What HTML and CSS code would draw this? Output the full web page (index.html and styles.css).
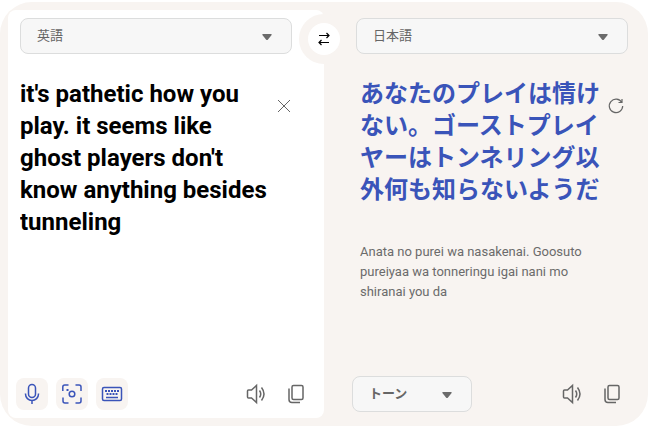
FILE: index.html
```
<!DOCTYPE html>
<html lang="ja">
  <head>
    <meta charset="UTF-8" />
    <meta name="viewport" content="width=device-width, initial-scale=1.0" />
    <title>翻訳</title>
    <link rel="stylesheet" href="styles.css">
  </head>
  <body>
    <main class="translator">
      <section class="panel source">
        <div class="select-box">
          <select class="select" aria-label="翻訳元の言語">
            <option>英語</option>
          </select>
          <svg class="arrow" viewBox="0 0 10 6"><path d="M1 0h8q1 0 .6 1L6 5.500q-1 1-2 0L.4 1Q0 0 1 0z" /></svg>
        </div>
        <div class="content">
          <textarea class="source-text" aria-label="原文" spellcheck="false">it's pathetic how you play. it seems like ghost players don't know anything besides tunneling</textarea>
          <button class="icon-btn side-btn" aria-label="クリア">
            <svg class="icon" viewBox="0 0 24 24"><path class="thin" d="M6 6l12 12M18 6L6 18" /></svg>
          </button>
        </div>
        <div class="toolbar">
          <button class="icon-btn tool" aria-label="音声入力">
            <svg class="icon" viewBox="0 0 24 24"><rect x="8.500" y="2.500" width="7" height="13" rx="3.500" /><path d="M5.500 11.500v.5a6.500 6.500 0 0 0 13 0v-.5M12 18.500v3.500" /></svg>
          </button>
          <button class="icon-btn tool" aria-label="画像">
            <svg class="icon" viewBox="0 0 24 24"><path d="M2.800 9V5a2 2 0 0 1 2-2H8.500M15.500 3H19a2 2 0 0 1 2 2v4M21 15.500V19a2 2 0 0 1-2 2h-3.500M8.500 21H5a2 2 0 0 1-2-2v-3.500" /><circle cx="12" cy="12" r="2.800" /><path d="M6.500 8h2" stroke-width="2" /></svg>
          </button>
          <button class="icon-btn tool" aria-label="キーボード">
            <svg class="icon" viewBox="0 0 24 24"><rect x="2.500" y="5.500" width="19" height="13" rx="1.500" /><path d="M5 9h14" stroke-width="2" stroke-dasharray="2 1" /><path d="M6.500 12h11" stroke-width="2" stroke-dasharray="2 1" /><path d="M6 15.500h12" /></svg>
          </button>
          <button class="icon-btn push" aria-label="原文を読み上げる">
            <svg class="icon" viewBox="0 0 24 24"><path d="M12.500 3.500v17L7.500 16H4.500a1 1 0 0 1-1-1V9a1 1 0 0 1 1-1h3zM15.500 8.500q2.500 3.500 0 7M17.500 5.500q5 6.500 0 13" /></svg>
          </button>
          <button class="icon-btn" aria-label="原文をコピー">
            <svg class="icon" viewBox="0 0 24 24"><rect x="8" y="3.500" width="11" height="14" rx="1.500" /><path d="M5 6.500v11a3 3 0 0 0 3 3H16" /></svg>
          </button>
        </div>
      </section>

      <button class="swap" aria-label="言語を入れ替える">
        <svg class="swap-icon" viewBox="0 0 12 14"><path d="M1 3.500h10M8.500 1L11 3.500 8.500 6M11 10.500H1M3.500 8L1 10.500 3.500 13" /></svg>
      </button>

      <section class="panel target">
        <div class="select-box">
          <select class="select" aria-label="翻訳先の言語">
            <option>日本語</option>
          </select>
          <svg class="arrow" viewBox="0 0 10 6"><path d="M1 0h8q1 0 .6 1L6 5.500q-1 1-2 0L.4 1Q0 0 1 0z" /></svg>
        </div>
        <div class="content">
          <div class="result">
            <p class="target-text">あなたのプレイは情けない。ゴーストプレイヤーはトンネリング以外何も知らないようだ</p>
            <p class="reading">Anata no purei wa nasakenai. Goosuto pureiyaa wa tonneringu igai nani mo shiranai you da</p>
          </div>
          <button class="icon-btn side-btn" aria-label="再翻訳">
            <svg class="icon" viewBox="0 0 24 24"><path class="refresh" d="M17.800 8.500A6.700 6.700 0 1 0 18.700 12M18 5v3.500h-3.500" /></svg>
          </button>
        </div>
        <div class="toolbar">
          <div class="select-box tone">
            <select class="select" aria-label="トーン">
              <option>トーン</option>
            </select>
            <svg class="arrow" viewBox="0 0 10 6"><path d="M1 0h8q1 0 .6 1L6 5.500q-1 1-2 0L.4 1Q0 0 1 0z" /></svg>
          </div>
          <button class="icon-btn push" aria-label="訳文を読み上げる">
            <svg class="icon" viewBox="0 0 24 24"><path d="M12.500 3.500v17L7.500 16H4.500a1 1 0 0 1-1-1V9a1 1 0 0 1 1-1h3zM15.500 8.500q2.500 3.500 0 7M17.500 5.500q5 6.500 0 13" /></svg>
          </button>
          <button class="icon-btn" aria-label="訳文をコピー">
            <svg class="icon" viewBox="0 0 24 24"><rect x="8" y="3.500" width="11" height="14" rx="1.500" /><path d="M5 6.500v11a3 3 0 0 0 3 3H16" /></svg>
          </button>
        </div>
      </section>
    </main>
  </body>
</html>
```
FILE: styles.css
```
* {
  box-sizing: border-box;
}
body {
  margin: 0;
  padding: 2px 0 1px;
  background-color: white;
  font-family: Roboto, "Noto Sans CJK JP", sans-serif;
}
.translator {
  position: relative;
  display: grid;
  grid-template-columns: 1fr 1fr;
  min-height: calc(100vh - 3px);
  padding: 8px;
  border-radius: 32px;
  background-color: #f8f4f1;
}
.panel {
  display: flex;
  flex-direction: column;
  padding: 8px 12px 6px;
  min-width: 0;
}
.source {
  border-radius: 8px;
  background-color: white;
}
.source .select-box {
  margin-right: 20px;
}
.target > .select-box {
  margin-left: 20px;
}

/* drop-downs */
.select-box {
  position: relative;
}
.select {
  display: block;
  width: 100%;
  height: 36px;
  padding: 0 32px 2px 16px;
  appearance: none;
  border: 1px solid #dcdddd;
  border-radius: 8px;
  background-color: #f7f7f7;
  color: #666;
  font-family: Roboto, "Noto Sans CJK JP", sans-serif;
  font-size: 13px;
}
.arrow {
  position: absolute;
  top: 16px;
  right: 20px;
  width: 10px;
  height: 6px;
  fill: #6b6b6b;
  pointer-events: none;
}
.tone {
  width: 120px;
}
.tone .select {
  font-weight: bold;
}

/* texts */
.content {
  display: flex;
  flex: 1;
  padding-top: 24px;
}
.source .content {
  padding-right: 12px;
}
.target .content {
  margin-right: -4px;
  padding-left: 24px;
}
.source-text,
.target-text {
  margin: 0;
  font-family: Roboto, "Noto Sans CJK JP", sans-serif;
  font-size: 24px;
  font-weight: bold;
  line-height: 32px;
}
.source-text {
  flex: 1;
  min-width: 0;
  padding: 0;
  border: none;
  outline: none;
  resize: none;
  overflow: hidden;
  background: none;
  color: black;
}
.result {
  flex: 1;
  min-width: 0;
}
.target-text {
  color: #3a54b9;
}
.reading {
  margin: 36px 0 0;
  color: #6b6b6b;
  font-size: 13px;
  line-height: 20px;
}

/* buttons */
.toolbar {
  display: flex;
  align-items: center;
  gap: 8px;
  height: 36px;
}
.source .toolbar {
  margin-left: -4px;
}
.target .toolbar {
  margin-left: 16px;
}
.icon-btn {
  display: flex;
  flex: none;
  align-items: center;
  justify-content: center;
  width: 32px;
  height: 32px;
  padding: 0;
  border: none;
  border-radius: 8px;
  background: none;
  color: #666;
  cursor: pointer;
}
.side-btn {
  margin-top: 12px;
}
.tool {
  background-color: #f8f4f1;
  color: #3a54b9;
}
.push {
  margin-left: auto;
}
.icon {
  width: 24px;
  height: 24px;
  fill: none;
  stroke: currentColor;
  stroke-width: 1.5;
}
.thin {
  stroke-width: 1;
}
.refresh {
  stroke-width: 1.2;
}
.swap {
  position: absolute;
  top: 12px;
  left: 50%;
  display: flex;
  align-items: center;
  justify-content: center;
  width: 50px;
  height: 50px;
  padding: 0;
  transform: translateX(-50%);
  border: 9px solid #f8f4f1;
  border-radius: 50%;
  background-color: white;
  cursor: pointer;
}
.swap-icon {
  flex: none;
  width: 12px;
  height: 14px;
  fill: none;
  stroke: black;
  stroke-width: 1.2;
}
```
